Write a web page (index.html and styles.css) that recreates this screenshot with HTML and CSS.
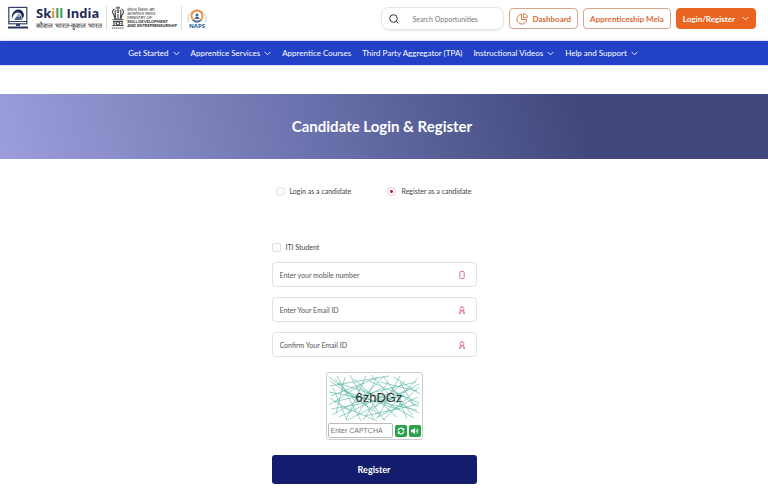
FILE: index.html
```html
<!DOCTYPE html>
<html lang="en">
<head>
    <meta charset="UTF-8">
    <meta name="viewport" content="width=device-width, initial-scale=1.0">
    <title>Candidate Login &amp; Register</title>
    <link rel="stylesheet" href="styles.css">
</head>
<body>
    <!-- Shared icons -->
    <svg class="sprite" aria-hidden="true">
        <symbol id="chevron" viewBox="0 0 8 5"><path d="M1 1l3 3 3-3" fill="none" stroke="currentColor" stroke-linecap="round" stroke-linejoin="round"/></symbol>
        <symbol id="user" viewBox="0 0 8 8"><path d="M4 .8a1.8 1.8 0 0 1 0 3.9A1.8 1.8 0 0 1 4 .8zM1.500 7.400h1c0-3.400 3-3.400 3 0h1M2.800 4.300C1.800 5 1.500 6 1.500 7.400M5.200 4.300C6.200 5 6.500 6 6.500 7.400" fill="none" stroke="currentColor" stroke-width=".7" stroke-linecap="round"/></symbol>
    </svg>

    <header class="header">
        <div class="logos">
            <div class="skill-logo">
                <svg class="skill-mark" viewBox="0 0 22 24" aria-hidden="true">
                    <rect x="1.8" y="1.4" width="18" height="16.4" fill="#fff" stroke="#35416a" stroke-width="1.2"/>
                    <path d="M5 13c-1-5 2-9 6-9.500 4-.3 6 3 6 6.500l-2 3c0-4-1-6-3.500-6.500C8 6 6 9 5 13z" fill="#1f2a55"/>
                    <path d="M7 14l3-4 2 1 2-2 1 5z" fill="#4a608c"/>
                    <path d="M10 9l2-2 1 3-2 1z" fill="#8aa4c4"/>
                    <path d="M2 15.500h18" stroke="#35416a"/>
                    <path d="M9 18h4v2H9z" fill="#35416a"/>
                    <path d="M1 20.500h20v2H1z" fill="#27345c"/>
                </svg>
                <div class="skill-name">
                    <strong>Sk<span class="saffron">i</span><span class="green">ll</span> India</strong>
                    <small lang="hi">कौशल भारत-कुशल भारत</small>
                </div>
            </div>
            <div class="ministry">
                <svg class="emblem" viewBox="0 0 14 24" aria-hidden="true">
                    <g fill="none" stroke="#444" stroke-width="1.1">
                        <path d="M3.500 3C1 4 1 7 3 9l1 4h6l1-4c2-2 2-5-.5-6M5 2.500c1-2 3-2 4 0M4.500 4c-1 2 0 4 0 8M9.500 4c1 2 0 4 0 8M7 2v3M6 6.500h2M7 8v4M5.500 5h3"/>
                        <path d="M1.500 13.800h11M2 15.500h10M1.500 19.500h11"/>
                        <circle cx="7" cy="17.400" r="1.600"/><path d="M3 16v3M11 16v3M4.500 17.500h1M8.500 17.500h1"/>
                    </g>
                    <path d="M1 22h12" stroke="#555" stroke-dasharray="1.500 .5"/>
                </svg>
                <div class="ministry-name">
                    <span lang="hi">कौशल विकास और</span>
                    <span lang="hi">उद्यमशीलता मंत्रालय</span>
                    <span>MINISTRY OF</span>
                    <b>SKILL DEVELOPMENT</b>
                    <b>AND ENTREPRENEURSHIP</b>
                </div>
            </div>
            <div class="naps">
                <svg class="naps-mark" viewBox="0 0 20 16" aria-hidden="true">
                    <path d="M1.500 15a9 9 0 1 1 17 0" fill="none" stroke="#8095ac" stroke-width=".8" stroke-dasharray="1 .5"/>
                    <circle cx="10" cy="9" r="5.500" fill="none" stroke="#ed8b36" stroke-width="1.800"/>
                    <path d="M6 13a5.500 5.500 0 0 0 8 0" fill="none" stroke="#3a83bf" stroke-width="1.800"/>
                    <circle cx="10" cy="8" r="1.500" fill="#2f6ca6"/>
                    <path d="M7.500 12c0-3 5-3 5 0" fill="#41719e"/>
                </svg>
                <b>NAPS</b>
            </div>
        </div>

        <div class="actions">
            <label class="search">
                <svg class="search-icon" viewBox="0 0 10 10" aria-hidden="true"><circle cx="4.500" cy="4.500" r="3.800" fill="none" stroke="#333"/><path d="M7.200 7.200L9.200 9.200" stroke="#333" stroke-linecap="round"/></svg>
                <input type="search" placeholder="Search Opportunities" aria-label="Search Opportunities">
            </label>
            <a class="btn btn-outline" href="#">
                <svg class="pie" viewBox="0 0 12 12" aria-hidden="true"><path d="M5.500 1.300A4.900 4.900 0 1 0 10.700 6.500H5.500zM7.300.7v4h4A4 4 0 0 0 7.300.7z" fill="none" stroke="currentColor" stroke-width=".9" stroke-linejoin="round"/></svg>
                Dashboard
            </a>
            <a class="btn btn-outline" href="#">Apprenticeship Mela</a>
            <button class="btn btn-login" type="button">Login/Register <svg class="chevron"><use href="#chevron"/></svg></button>
        </div>
    </header>

    <nav class="nav">
        <a href="#">Get Started <svg class="chevron"><use href="#chevron"/></svg></a>
        <a href="#">Apprentice Services <svg class="chevron"><use href="#chevron"/></svg></a>
        <a href="#">Apprentice Courses</a>
        <a href="#">Third Party Aggregator (TPA)</a>
        <a href="#">Instructional Videos <svg class="chevron"><use href="#chevron"/></svg></a>
        <a href="#">Help and Support <svg class="chevron"><use href="#chevron"/></svg></a>
    </nav>

    <section class="banner">
        <h1>Candidate Login &amp; Register</h1>
    </section>

    <main>
        <form class="form">
            <div class="modes">
                <label><input type="radio" name="mode" value="login"> Login as a candidate</label>
                <label><input type="radio" name="mode" value="register" checked> Register as a candidate</label>
            </div>
            <label class="iti"><input type="checkbox"> ITI Student</label>
            <label class="field">
                <input type="tel" placeholder="Enter your mobile number" aria-label="Mobile number">
                <svg viewBox="0 0 8 8" aria-hidden="true"><rect x="1.800" y=".6" width="4.400" height="6.800" rx=".7" fill="none" stroke="currentColor" stroke-width=".8"/></svg>
            </label>
            <label class="field">
                <input type="email" placeholder="Enter Your Email ID" aria-label="Email ID">
                <svg><use href="#user"/></svg>
            </label>
            <label class="field">
                <input type="email" placeholder="Confirm Your Email ID" aria-label="Confirm Email ID">
                <svg><use href="#user"/></svg>
            </label>

            <div class="captcha">
                <svg class="captcha-image" viewBox="0 0 93 49" role="img" aria-label="Captcha">
                    <path class="noise" d="M1 3L40 33M2 12L61 2M3 22L48 4M1 31L36 9M4 41L54 14M9 2L33 47M17 3L8 39M2 7L51 40M22 1L46 45M13 16L72 36M6 28L88 8M3 35L77 22M26 5L69 43M38 2L18 46M49 3L30 41M41 7L91 29M55 2L84 41M60 8L35 46M66 3L92 20M72 2L50 43M77 7L43 37M90 4L58 38M91 13L55 46M90 23L48 44M24 22L89 36M29 12L86 44M11 43L64 18M20 46L80 15M1 18L39 25M7 5L29 29M34 15L57 47M49 19L91 39M63 14L90 33M2 24L23 38M14 32L49 47M52 8L89 17M43 1L67 27M56 29L91 10M5 14L19 46M37 42L91 30M10 9L56 24M68 18L79 45M23 36L54 4M72 8L86 32"/>
                    <text x="51" y="28" text-anchor="middle">6zhDGz</text>
                </svg>
                <div class="captcha-row">
                    <input type="text" placeholder="Enter CAPTCHA" aria-label="Enter CAPTCHA">
                    <button type="button" aria-label="Refresh captcha"><svg viewBox="0 0 8 8"><path d="M1 3.500C2 .5 5.500.5 6.500 2.500M7 4.500C6 7.500 2.500 7.500 1.500 5.500" fill="none" stroke="#fff" stroke-width="1.100"/><path d="M7.300.8v2.700H4.600zM.7 7.200V4.500h2.700z" fill="#fff"/></svg></button>
                    <button type="button" aria-label="Play captcha"><svg viewBox="0 0 8 8"><path d="M0 2.800h1.700L4 .8v6.400L1.700 5.200H0z" fill="#fff"/><path d="M5 2.700q1 1.300 0 2.600M6 1.500q2.200 2.500 0 5" fill="none" stroke="#fff" stroke-width=".8"/></svg></button>
                </div>
            </div>

            <button class="register" type="submit">Register</button>
        </form>
    </main>
</body>
</html>
```
FILE: styles.css
```css
* {
    box-sizing: border-box;
}

body {
    margin: 0;
    background: #fff;
    color: #444;
    font-family: Lato, sans-serif;
    font-size: 8px;
    line-height: 10px;
}

a {
    color: inherit;
    text-decoration: none;
}

input, button {
    font: inherit;
    margin: 0;
}

svg {
    display: block;
    flex: none;
}

.sprite {
    position: absolute;
    width: 0;
    height: 0;
}

.chevron {
    width: 7px;
    height: 5px;
}

/* Header */
.header {
    display: flex;
    justify-content: space-between;
    align-items: flex-start;
    height: 41px;
    padding: 6px 12px 0 7px;
}

.logos, .skill-logo, .ministry, .actions, .nav, .nav a, .btn, .search {
    display: flex;
    align-items: center;
}

.skill-mark {
    width: 22px;
    height: 24px;
}

.skill-name {
    margin-left: 7px;
    white-space: nowrap;
}

.skill-name strong, .skill-name small {
    display: block;
}

.skill-name strong {
    color: #222c56;
    font-family: "Open Sans", sans-serif;
    font-size: 13px;
    line-height: 15px;
}

.skill-name .saffron {
    color: #f18a2b;
}

.skill-name .green {
    color: #3b9c5c;
}

.skill-name small {
    color: #222;
    font-size: 7px;
    line-height: 9px;
}

.ministry {
    gap: 2px;
    margin-left: 4px;
    padding: 0 4px;
    border-left: 1px solid #ddd;
    border-right: 1px solid #ddd;
}

.emblem {
    width: 14px;
    height: 24px;
}

.ministry-name {
    display: flex;
    flex-direction: column;
    color: #222;
    font-size: 4px;
    line-height: 4px;
    white-space: nowrap;
}

.naps {
    display: flex;
    flex-direction: column;
    align-items: center;
    margin-left: 5px;
    color: #245c96;
    font-family: "Open Sans", sans-serif;
    font-size: 6px;
    line-height: 7px;
}

.naps-mark {
    width: 20px;
    height: 16px;
}

.actions {
    gap: 5px;
    padding-top: 1px;
}

.search {
    width: 123px;
    height: 23px;
    padding: 0 7px;
    gap: 13px;
    border: 1px solid #e4e4e4;
    border-radius: 8px;
    box-shadow: 0 1px 2px #eee;
}

.search-icon {
    width: 10px;
    height: 10px;
}

.search input {
    width: 100%;
    min-width: 0;
    padding: 0;
    border: 0;
    outline: 0;
    background: none;
    font-size: 7px;
}

.search input::placeholder {
    color: #777;
}

.btn {
    height: 21px;
    padding: 0 6px;
    border: 1px solid #d5a58c;
    border-radius: 4px;
    font-weight: bold;
    white-space: nowrap;
}

.btn-outline {
    color: #d96c37;
}

.pie {
    width: 12px;
    height: 12px;
    margin-right: 4px;
}

.btn-login {
    gap: 7px;
    border-color: #e8641f;
    background: #e8641f;
    color: #fff;
}

/* Navigation */
.nav {
    justify-content: center;
    gap: 11px;
    height: 24px;
    padding-right: 2px;
    background: #2341c6;
    box-shadow: 0 0 2px #9dacea;
    color: #fff;
    white-space: nowrap;
}

.nav a {
    gap: 4px;
}

/* Page title */
.banner {
    display: flex;
    align-items: center;
    justify-content: center;
    height: 65px;
    margin-top: 29px;
    padding: 0 4px 2px 0;
    background: linear-gradient(75deg, #9c9ddd 0%, #878bc5 18%, #6c72ad 40%, #555d95 58%, #41477c 76%, #41477c 100%);
}

h1 {
    margin: 0;
    color: #fff;
    font-size: 15px;
    line-height: 20px;
}

/* Form */
main {
    padding-right: 20px;
}

.form {
    display: flex;
    flex-direction: column;
    width: 205px;
    margin: 27px auto 10px;
}

.modes {
    display: flex;
    justify-content: space-between;
    padding: 0 5px 0 4px;
    font-size: 7px;
    white-space: nowrap;
}

.modes label, .iti {
    display: flex;
    align-items: center;
    gap: 5px;
}

.modes input, .iti input {
    appearance: none;
    width: 9px;
    height: 9px;
    border: 1px solid #ddd;
    background: #fff;
}

.modes input {
    border-radius: 50%;
}

.modes input:checked {
    border-color: #efc4d4;
    background: radial-gradient(#b52450 0 1px, #fff 2px);
}

.iti {
    margin: 46px 0 10px;
    font-size: 7px;
}

.iti input {
    border-radius: 2px;
}

.field {
    display: flex;
    align-items: center;
    height: 25px;
    margin-bottom: 10px;
    padding: 0 10px 0 7px;
    border: 1px solid #e2e2e6;
    border-radius: 4px;
    color: #d84c78;
}

.field input {
    flex: 1;
    min-width: 0;
    padding: 0;
    border: 0;
    outline: 0;
    background: none;
    font-size: 7px;
}

.field input::placeholder {
    color: #555;
}

.field svg {
    width: 8px;
    height: 8px;
}

/* Captcha */
.captcha {
    align-self: center;
    width: 97px;
    margin: 5px 0 15px;
    padding: 1px;
    border: 1px solid #ccc;
    border-radius: 3px;
}

.captcha-image {
    width: 93px;
    height: 49px;
}

.captcha-image text {
    fill: #333;
    font-family: "Liberation Sans", sans-serif;
    font-size: 13px;
}

.noise {
    fill: none;
    stroke: #56b3a0;
    stroke-width: .6;
}

.captcha-row {
    display: flex;
    align-items: center;
    gap: 2px;
}

.captcha-row input {
    flex: 1;
    min-width: 0;
    height: 15px;
    padding: 0 2px;
    border: 1px solid #bbb;
    border-radius: 2px;
    font-family: "Liberation Sans", sans-serif;
    font-size: 7px;
}

.captcha-row button {
    display: flex;
    align-items: center;
    justify-content: center;
    width: 12px;
    height: 12px;
    padding: 0;
    border: 0;
    border-radius: 2px;
    background: #28a349;
}

.captcha-row svg {
    width: 8px;
    height: 8px;
}

.register {
    height: 29px;
    border: 0;
    border-radius: 3px;
    background: #141d6d;
    color: #fff;
    font-size: 9px;
    font-weight: bold;
}
```
